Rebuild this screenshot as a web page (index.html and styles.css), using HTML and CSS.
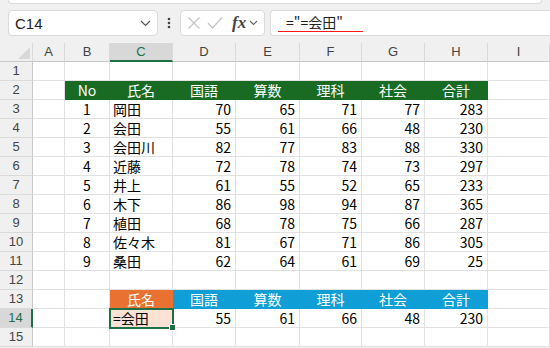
FILE: index.html
```html
<!DOCTYPE html>
<html lang="ja">
<head>
    <meta charset="UTF-8">
    <title>Sheet</title>
    <link rel="stylesheet" href="styles.css">
</head>
<body>
    <div class="top-edge"></div>
    <div class="formula-bar">
        <div class="name-box">
            <span>C14</span>
            <svg width="11" height="7" viewBox="0 0 11 7"><path d="M1 1l4.5 4.5L10 1" fill="none" stroke="#555" stroke-width="1.2"/></svg>
        </div>
        <div class="dots">
            <svg width="4" height="12" viewBox="0 0 4 12"><circle cx="2" cy="2" r="1.3" fill="#444"/><circle cx="2" cy="6" r="1.3" fill="#444"/><circle cx="2" cy="10" r="1.3" fill="#444"/></svg>
        </div>
        <div class="fx-box">
            <svg width="14" height="14" viewBox="0 0 14 14"><path d="M1.5 1.5l11 11M12.5 1.5l-11 11" stroke="#c4c4c4" stroke-width="1.2"/></svg>
            <svg width="16" height="14" viewBox="0 0 16 14"><path d="M1 7l4.5 5L15 1.5" fill="none" stroke="#c4c4c4" stroke-width="1.2"/></svg>
            <span class="fx">fx</span>
            <svg width="9" height="6" viewBox="0 0 9 6"><path d="M1 1l3.5 3.5L8 1" fill="none" stroke="#666" stroke-width="1.1"/></svg>
        </div>
        <div class="input-box">
            <span class="formula">="=会田"</span>
        </div>
    </div>

    <div class="sheet">
        <div class="hd corner"><span class="tri"></span></div>
        <div class="hd">A</div><div class="hd">B</div><div class="hd sel">C</div><div class="hd">D</div>
        <div class="hd">E</div><div class="hd">F</div><div class="hd">G</div><div class="hd">H</div><div class="hd">I</div>

        <div class="rh">1</div><div></div><div></div><div></div><div></div><div></div><div></div><div></div><div></div><div></div>

        <div class="rh">2</div><div></div>
        <div class="c green">No</div><div class="c green">氏名</div><div class="c green">国語</div><div class="c green">算数</div>
        <div class="c green">理科</div><div class="c green">社会</div><div class="c green">合計</div><div></div>

        <div class="rh">3</div><div></div><div class="c">1</div><div class="l">岡田</div><div class="r">70</div><div class="r">65</div><div class="r">71</div><div class="r">77</div><div class="r">283</div><div></div>
        <div class="rh">4</div><div></div><div class="c">2</div><div class="l">会田</div><div class="r">55</div><div class="r">61</div><div class="r">66</div><div class="r">48</div><div class="r">230</div><div></div>
        <div class="rh">5</div><div></div><div class="c">3</div><div class="l">会田川</div><div class="r">82</div><div class="r">77</div><div class="r">83</div><div class="r">88</div><div class="r">330</div><div></div>
        <div class="rh">6</div><div></div><div class="c">4</div><div class="l">近藤</div><div class="r">72</div><div class="r">78</div><div class="r">74</div><div class="r">73</div><div class="r">297</div><div></div>
        <div class="rh">7</div><div></div><div class="c">5</div><div class="l">井上</div><div class="r">61</div><div class="r">55</div><div class="r">52</div><div class="r">65</div><div class="r">233</div><div></div>
        <div class="rh">8</div><div></div><div class="c">6</div><div class="l">木下</div><div class="r">86</div><div class="r">98</div><div class="r">94</div><div class="r">87</div><div class="r">365</div><div></div>
        <div class="rh">9</div><div></div><div class="c">7</div><div class="l">植田</div><div class="r">68</div><div class="r">78</div><div class="r">75</div><div class="r">66</div><div class="r">287</div><div></div>
        <div class="rh">10</div><div></div><div class="c">8</div><div class="l">佐々木</div><div class="r">81</div><div class="r">67</div><div class="r">71</div><div class="r">86</div><div class="r">305</div><div></div>
        <div class="rh">11</div><div></div><div class="c">9</div><div class="l">桑田</div><div class="r">62</div><div class="r">64</div><div class="r">61</div><div class="r">69</div><div class="r">25</div><div></div>

        <div class="rh">12</div><div></div><div></div><div></div><div></div><div></div><div></div><div></div><div></div><div></div>

        <div class="rh">13</div><div></div><div></div>
        <div class="c orange">氏名</div><div class="c blue">国語</div><div class="c blue">算数</div>
        <div class="c blue">理科</div><div class="c blue">社会</div><div class="c blue">合計</div><div></div>

        <div class="rh sel">14</div><div></div><div></div>
        <div class="l active">=会田<span class="handle"></span></div>
        <div class="r">55</div><div class="r">61</div><div class="r">66</div><div class="r">48</div><div class="r">230</div><div></div>

        <div class="rh">15</div><div></div><div></div><div></div><div></div><div></div><div></div><div></div><div></div><div></div>
    </div>
</body>
</html>
```

FILE: styles.css
```css
body {
    margin: 0;
    width: 550px;
    height: 348px;
    overflow: hidden;
    background-color: #f0f0f0;
    font-family: "Noto Sans CJK JP", "Noto Sans", sans-serif;
    color: #000;
}
.top-edge {
    height: 3px;
    margin: 0 8px 0 8px;
    background-color: #fff;
    border: 1px solid #dcdcdc;
    border-top: none;
    border-radius: 0 0 4px 4px;
}
.formula-bar {
    display: flex;
    align-items: center;
    height: 26px;
    margin-top: 6px;
    padding-left: 8px;
}
.name-box {
    box-sizing: border-box;
    width: 150px;
    height: 26px;
    display: flex;
    align-items: center;
    justify-content: space-between;
    padding: 0 6px 0 6px;
    background-color: #fff;
    border: 1px solid #dadada;
    border-radius: 4px;
    font-family: "Liberation Sans", sans-serif;
    font-size: 15px;
    color: #222;
}
.dots {
    width: 22px;
    display: flex;
    justify-content: center;
}
.fx-box {
    box-sizing: border-box;
    width: 85px;
    height: 26px;
    display: flex;
    align-items: center;
    gap: 6px;
    padding-left: 6px;
    background-color: #fff;
    border: 1px solid #dadada;
    border-radius: 4px;
}
.fx {
    font-family: "Liberation Serif", serif;
    font-style: italic;
    font-weight: bold;
    font-size: 17px;
    color: #444;
    margin-left: 3px;
    margin-right: -3px;
}
.input-box {
    box-sizing: border-box;
    flex: 1;
    height: 26px;
    margin-left: 5px;
    padding-left: 7px;
    display: flex;
    align-items: center;
    background-color: #fff;
    border: 1px solid #dadada;
    border-right: none;
    border-radius: 4px 0 0 4px;
}
.formula {
    font-family: "Noto Sans CJK JP", sans-serif;
    font-size: 14px;
    color: #222;
    padding: 0 20px 0 8px;
    border-bottom: 1px solid #ff1a1a;
    line-height: 17px;
}
.sheet {
    margin-top: 7px;
    display: grid;
    grid-template-columns: 33px 32px 45px 63px 63px 64px 62px 63px 63px 62px;
    grid-auto-rows: 19px;
    background-color: #fff;
    font-size: 14px;
}
.sheet > div {
    box-sizing: border-box;
    border-right: 1px solid #e1e1e1;
    border-bottom: 1px solid #e1e1e1;
    line-height: 18px;
    white-space: nowrap;
}
.sheet > .hd {
    background-color: #f0f0f0;
    border-right: 1px solid #dadada;
    border-bottom: 1px solid #c8c8c8;
    text-align: center;
    font-family: "Liberation Sans", sans-serif;
    font-size: 13px;
    color: #444;
}
.sheet > .hd.sel {
    background-color: #d8d8d8;
    border-bottom: 2px solid #1e7145;
    color: #1e6e48;
}
.corner {
    position: relative;
}
.tri {
    position: absolute;
    right: 2px;
    bottom: 2px;
    width: 0;
    height: 0;
    border-left: 12px solid transparent;
    border-bottom: 12px solid #d8d8d8;
}
.sheet > .rh {
    background-color: #f0f0f0;
    border-right: 1px solid #c8c8c8;
    border-bottom: 1px solid #dadada;
    text-align: center;
    font-family: "Liberation Sans", sans-serif;
    font-size: 13px;
    color: #444;
}
.sheet > .rh.sel {
    background-color: #d8d8d8;
    border-right: 2px solid #1e7145;
    color: #1e6e48;
}
.c {
    text-align: center;
}
.l {
    padding-left: 3px;
}
.r {
    text-align: right;
    padding-right: 4px;
}
.sheet > .green {
    background-color: #196b24;
    border-color: #196b24;
    color: #fff;
}
.sheet > .orange {
    background-color: #e97132;
    border-color: #e97132;
    color: #fff;
}
.sheet > .blue {
    background-color: #0f9ed5;
    border-color: #0f9ed5;
    color: #fff;
}
.sheet > .active {
    position: relative;
    background-color: #fbe2d5;
    outline: 2px solid #1e7145;
    outline-offset: -1px;
    z-index: 1;
}
.handle {
    position: absolute;
    right: -4px;
    bottom: -4px;
    width: 5px;
    height: 5px;
    background-color: #1e7145;
    border: 1px solid #fff;
}
```
